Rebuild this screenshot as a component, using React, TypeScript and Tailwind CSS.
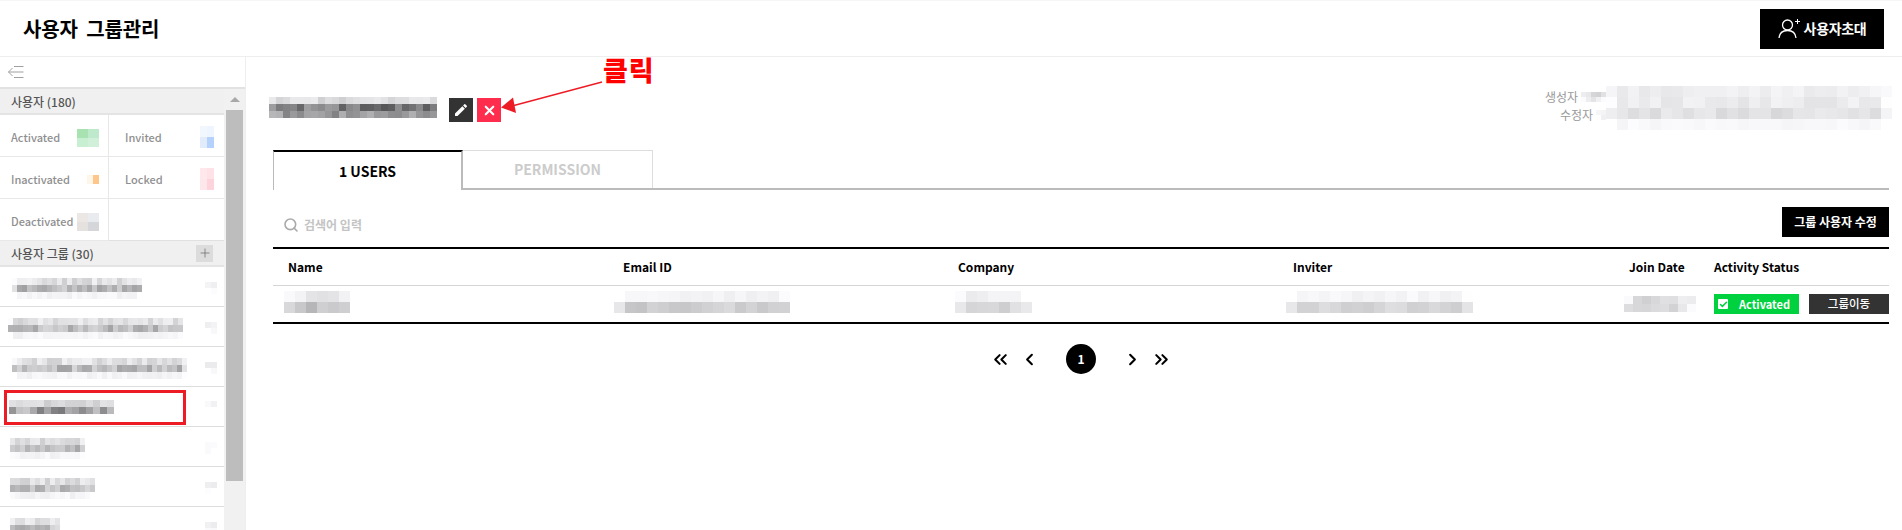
import { Check, ChevronLeft, ChevronRight, ChevronsLeft, ChevronsRight, Plus, Search, X } from "lucide-react";
import { MdEdit } from "react-icons/md";

type MosaicProps = {
  cols: number;
  cell: number;
  cellH?: number;
  // [darkest, lightest] grey level for each row of blocks
  rows: [number, number][];
  seed?: number;
};

// The reference has names and emails blurred out, so this paints the same blocks.
function Mosaic({ cols, cell, cellH, rows, seed = 1 }: MosaicProps) {
  return (
    <div className="flex shrink-0 flex-col">
      {rows.map(([low, high], r) => (
        <div key={r} className="flex">
          {Array.from({ length: cols }, (_, c) => {
            const n = Math.abs(Math.sin((c + 1) * 12.9898 + (r + 1) * 78.233 + seed) * 43758.5453) % 1;
            const v = Math.round(low + (high - low) * n);
            const edge = c === 0 || c === cols - 1 ? 12 : 0;
            const g = Math.min(255, v + edge);
            return <span key={c} style={{ width: cell, height: cellH ?? cell, background: `rgb(${g},${g},${Math.min(255, g + 2)})` }} />;
          })}
        </div>
      ))}
    </div>
  );
}

function Blocks({ colors, w, h }: { colors: string[][]; w: number; h: number }) {
  return (
    <div className="flex shrink-0 flex-col">
      {colors.map((row, r) => (
        <div key={r} className="flex">
          {row.map((color, c) => (
            <span key={c} style={{ width: w, height: h, background: color }} />
          ))}
        </div>
      ))}
    </div>
  );
}

function PanelToggle() {
  return (
    <svg width="16" height="12" viewBox="0 0 16 12" fill="none" stroke="#a0a0a0" strokeWidth="1">
      <path d="M0.5 6H15.5M4.5 2L0.5 6L4.5 10M6 0.5H15.5M6 11.5H15.5" />
    </svg>
  );
}

function InviteIcon() {
  return (
    <svg width="23" height="23" viewBox="0 0 23 23" fill="none" stroke="#fff" strokeWidth="1.3">
      <circle cx="9.5" cy="8" r="5" />
      <path d="M1 21C1.5 16 5 13.5 9.5 13.5S17.5 16 18 21" />
      <path d="M17 4.5H22M19.5 2V7" strokeWidth="1" />
    </svg>
  );
}

function StatCell({ label, colors, w, h, side }: { label: string; colors: string[][]; w: number; h: number; side: "left" | "right" }) {
  return side === "left" ? (
    <div className="flex h-[42px] w-[109px] shrink-0 items-center justify-between border-b border-r border-[#e8e8e8] pl-[11px] pr-[9px] pt-[4px]">
      <span className="text-[11px] font-medium text-[#8f8f8f]">{label}</span>
      <Blocks colors={colors} w={w} h={h} />
    </div>
  ) : (
    <div className="flex h-[42px] flex-1 items-center justify-between border-b border-[#e8e8e8] pl-[16px] pr-[10px] pt-[2px]">
      <span className="pt-[2px] text-[11px] font-medium text-[#8f8f8f]">{label}</span>
      <Blocks colors={colors} w={w} h={h} />
    </div>
  );
}

const groups = [
  { cols: 26, seed: 3, pad: "pl-[12px] pt-[3px]" },
  { cols: 35, seed: 5, pad: "pl-[8px] pt-[3px]" },
  { cols: 35, seed: 7, pad: "pl-[12px] pt-[3px]" },
  { cols: 15, seed: 9, pad: "pl-[9px] pt-[1px]" },
  { cols: 15, seed: 11, pad: "pl-[10px] pt-[3px]" },
  { cols: 17, seed: 13, pad: "pl-[10px] pt-[3px]" },
  { cols: 10, seed: 15, pad: "pl-[10px] pt-[3px]" },
];

export default function App() {
  return (
    <div className="flex h-screen flex-col overflow-hidden bg-white font-['Noto_Sans_CJK_KR','Noto_Sans',sans-serif] text-black">
      <header className="flex h-[57px] shrink-0 items-center justify-between border-b border-t border-b-[#eeeeee] border-t-[#f6f6f6] pl-[23px] pr-[18px]">
        <h1 className="text-[20px] font-bold tracking-[-0.2px]">사용자 &nbsp;그룹관리</h1>
        <button className="flex h-[40px] w-[124px] items-center justify-center gap-[3px] bg-black text-[14px] font-bold tracking-[-0.3px] text-white">
          <InviteIcon />
          사용자초대
        </button>
      </header>

      <div className="flex min-h-0 flex-1">
        <aside className="flex w-[246px] shrink-0 flex-col overflow-hidden border-r border-[#eeeeee]">
          <div className="flex h-[32px] shrink-0 items-center border-b-2 border-[#e2e2e2] pl-[8px]">
            <PanelToggle />
          </div>
          <div className="flex min-h-0 flex-1">
            <div className="relative w-[224px] shrink-0">
              <div className="flex h-[26px] items-center border-b-2 border-[#e4e4e4] bg-[#f0f0f0] pl-[11px] pt-[1px] text-[12px] font-medium text-[#555]">
                사용자 (180)
              </div>
              <div className="flex">
                <StatCell side="left" label="Activated" w={11} h={9} colors={[["#a8e2b0", "#bfe9cc"], ["#c9efd2", "#d0f0da"]]} />
                <StatCell side="right" label="Invited" w={7} h={11} colors={[["#f2f7fe", "#eef5fe"], ["#e2ebfb", "#b4d2fb"]]} />
              </div>
              <div className="flex">
                <StatCell side="left" label="Inactivated" w={6} h={9} colors={[["#fff6ea", "#ffc68a"]]} />
                <StatCell side="right" label="Locked" w={7} h={11} colors={[["#fee8ec", "#fee2e7"], ["#fee7ea", "#fed4dc"]]} />
              </div>
              <div className="flex">
                <StatCell side="left" label="Deactivated" w={11} h={9} colors={[["#eae7e5", "#e9ebee"], ["#e4e1df", "#d4d6da"]]} />
                <div className="flex-1 border-b border-[#e0e0e0]" />
              </div>
              <div className="flex h-[26px] items-center justify-between border-b-2 border-[#e4e4e4] bg-[#f0f0f0] pl-[11px] pr-[11px] text-[12px] font-medium text-[#555]">
                <span className="pt-[2px]">사용자 그룹 (30)</span>
                <span className="flex h-[17px] w-[17px] items-center justify-center bg-[#dcdcdc]">
                  <Plus size={14} strokeWidth={1.2} color="#666" />
                </span>
              </div>
              {groups.map((g, i) => (
                <div key={i} className={`relative flex h-[40px] items-center justify-between border-b border-[#dddddd] pr-[7px] ${g.pad}`}>
                  {i === 3 ? (
                    <Mosaic cols={g.cols} cell={7} rows={[[200, 230], [120, 205]]} seed={g.seed} />
                  ) : (
                    <Mosaic cols={g.cols} cell={5} cellH={7} rows={[[205, 242], [160, 215], [238, 250]]} seed={g.seed} />
                  )}
                  <Mosaic cols={2} cell={6} rows={[[222, 240], [232, 248]]} seed={g.seed + 1} />
                  {i === 3 && <div className="absolute left-[4px] top-[3px] h-[35px] w-[182px] border-[3px] border-[#ed1c24]" />}
                </div>
              ))}
            </div>
            <div className="flex w-[21px] flex-col bg-[#f1f1f1] px-[2px]">
              <div className="flex h-[21px] shrink-0 items-center justify-center">
                <div className="h-0 w-0 border-x-[5px] border-b-[5px] border-x-transparent border-b-[#a8a8a8]" />
              </div>
              <div className="h-[371px] shrink-0 bg-[#bdbdbd]" />
            </div>
          </div>
        </aside>

        <main className="relative min-w-0 flex-1 pl-[27px] pr-[13px]">
          <div className="flex h-[93px] items-start justify-between">
            <div className="flex items-center gap-[12px] pt-[41px]">
              <div className="-ml-[4px] -mt-[5px]">
                <Mosaic cols={24} cell={7} rows={[[205, 235], [85, 160], [130, 180]]} seed={4} />
              </div>
              <div className="flex gap-[4px]">
                <button className="flex h-[24px] w-[24px] items-center justify-center bg-[#333333]">
                  <MdEdit size={16} color="#fff" />
                </button>
                <button className="flex h-[24px] w-[24px] items-center justify-center bg-[#ff2d4d]">
                  <X size={15} strokeWidth={3.4} color="#fff" />
                </button>
              </div>
            </div>
            <div className="-mr-[3px] flex pt-[29px]">
              <div className="flex flex-col items-end pt-[2px] text-[12px] leading-[18px] text-[#999]">
                <div className="flex items-center gap-[3px]">
                  <span>생성자</span>
                  <Mosaic cols={5} cell={5} rows={[[210, 235], [225, 245]]} seed={2} />
                </div>
                <div className="flex items-center gap-[3px]">
                  <span>수정자</span>
                  <Mosaic cols={2} cell={5} rows={[[210, 235], [225, 245]]} seed={3} />
                </div>
              </div>
              <Mosaic cols={26} cell={11} rows={[[232, 246], [228, 244], [215, 235], [245, 252]]} seed={8} />
            </div>
          </div>

          <div className="flex h-[40px] border-b-2 border-[#bbbbbb]">
            <div className="-mb-[2px] flex h-[40px] w-[190px] items-center justify-center border-l border-r-2 border-t-2 border-l-[#bbbbbb] border-r-[#bbbbbb] border-t-black bg-white text-[14px] font-bold">
              1 USERS
            </div>
            <div className="flex h-[38px] w-[190px] items-center justify-center border-r border-t border-[#dddddd] text-[14px] font-bold text-[#cccccc]">
              PERMISSION
            </div>
          </div>

          <div className="flex h-[57px] items-center justify-between pt-[7px]">
            <div className="mt-[6px] flex items-center gap-[5px] pl-[10px]">
              <Search size={16} strokeWidth={2.4} color="#aaa" />
              <span className="text-[12px] font-bold text-[#c4c4c4]">검색어 입력</span>
            </div>
            <button className="h-[30px] w-[107px] bg-black text-[12px] font-bold text-white">그룹 사용자 수정</button>
          </div>

          <div className="border-b-2 border-t-2 border-black">
            <div className="flex h-[37px] items-center border-b border-[#d5d5d5] text-[12px] font-bold">
              <div className="w-[350px] pl-[15px]">Name</div>
              <div className="w-[335px]">Email ID</div>
              <div className="w-[335px]">Company</div>
              <div className="w-[336px]">Inviter</div>
              <div className="w-[85px]">Join Date</div>
              <div>Activity Status</div>
            </div>
            <div className="flex h-[36px] items-center">
              <div className="w-[350px] pb-[4px] pl-[11px]">
                <Mosaic cols={6} cell={11} rows={[[225, 245], [175, 215]]} seed={2} />
              </div>
              <div className="-ml-[9px] w-[344px] pb-[4px]">
                <Mosaic cols={16} cell={11} rows={[[238, 248], [195, 220]]} seed={3} />
              </div>
              <div className="-ml-[3px] w-[338px] pb-[4px]">
                <Mosaic cols={7} cell={11} rows={[[232, 245], [200, 225]]} seed={4} />
              </div>
              <div className="-ml-[7px] w-[343px] pb-[4px]">
                <Mosaic cols={17} cell={11} rows={[[240, 250], [205, 225]]} seed={6} />
              </div>
              <div className="-ml-[5px] w-[90px]">
                <Mosaic cols={8} cell={9} cellH={8} rows={[[205, 240], [205, 240]]} seed={5} />
              </div>
              <div className="flex h-[20px] w-[85px] items-center gap-[11px] bg-[#00d13f] pl-[4px] text-[11px] font-bold text-white">
                <span className="flex h-[10px] w-[10px] items-center justify-center rounded-[1px] bg-white">
                  <Check size={9} strokeWidth={4} color="#00d13f" />
                </span>
                Activated
              </div>
              <div className="ml-[10px] flex h-[20px] w-[80px] items-center justify-center bg-[#333333] text-[11.5px] font-medium text-white">
                그룹이동
              </div>
            </div>
          </div>

          <nav className="flex h-[70px] items-center justify-center text-black">
            <ChevronsLeft size={21} strokeWidth={2.4} />
            <ChevronLeft size={19} strokeWidth={2.6} className="ml-[9px]" />
            <span className="ml-[27px] flex h-[30px] w-[30px] items-center justify-center rounded-full bg-black text-[12px] font-bold text-white">
              1
            </span>
            <ChevronRight size={19} strokeWidth={2.6} className="ml-[27px]" />
            <ChevronsRight size={21} strokeWidth={2.4} className="ml-[9px]" />
          </nav>

          {/* annotation drawn over the page */}
          <span className="absolute left-[357px] top-[-4px] text-[27px] font-black leading-[34px] tracking-[1px] text-[#ff0000]">클릭</span>
          <svg className="absolute left-[250px] top-[20px]" width="110" height="40" viewBox="0 0 110 40" fill="none">
            <path d="M106 5L16 29" stroke="#ed1c24" strokeWidth="1.5" />
            <path d="M5 30.5L17 20.5L20 36Z" fill="#ed1c24" />
          </svg>
        </main>
      </div>
    </div>
  );
}
